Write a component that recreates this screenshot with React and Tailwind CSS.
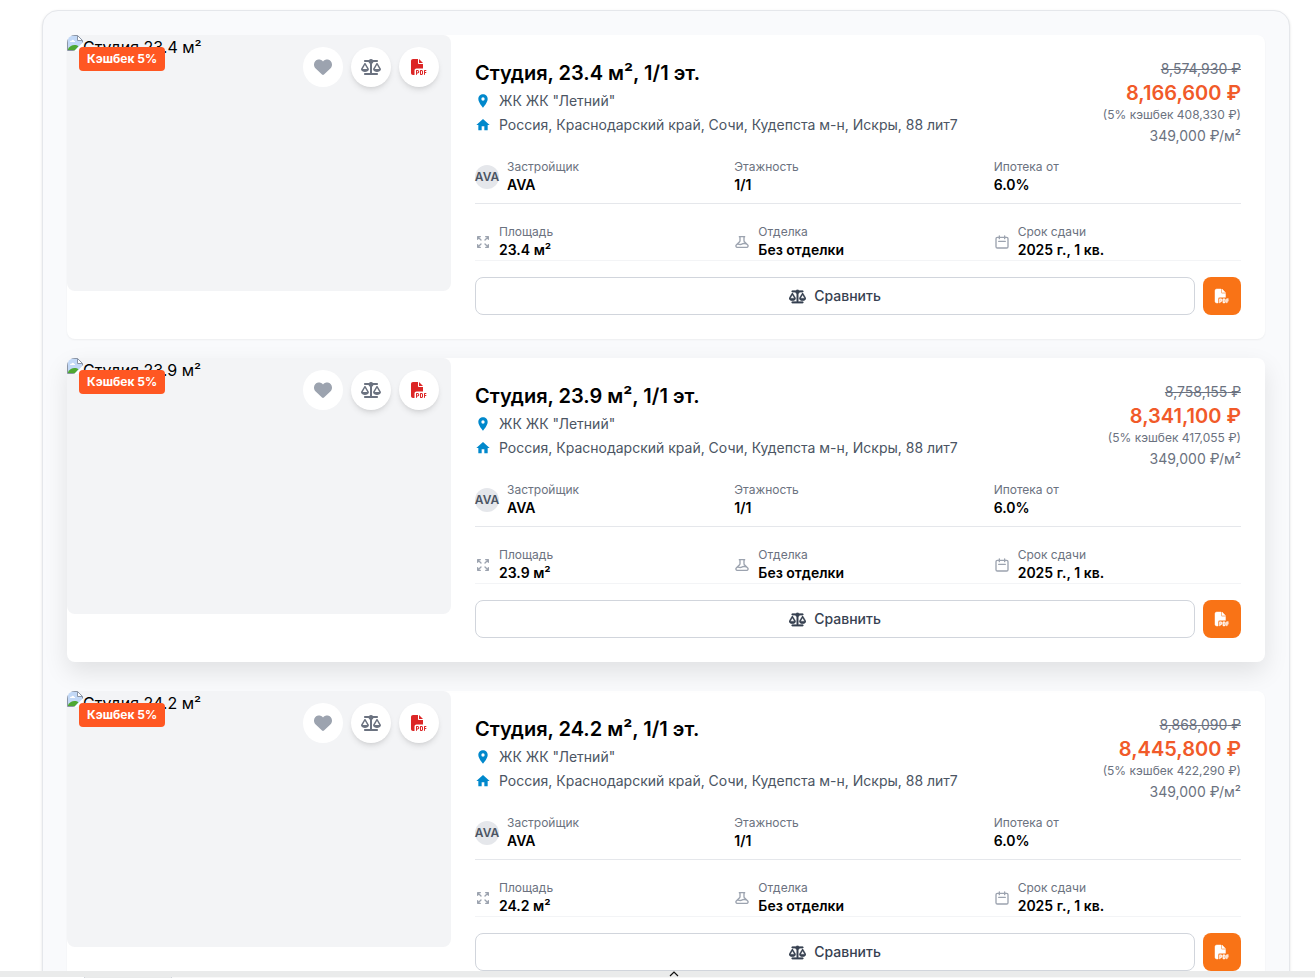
import { FaHeart, FaScaleBalanced, FaFilePdf } from "react-icons/fa6";
import { MdLocationOn, MdHome } from "react-icons/md";

const flats = [
  { area: "23.4", old: "8,574,930", price: "8,166,600", cashback: "408,330" },
  { area: "23.9", old: "8,758,155", price: "8,341,100", cashback: "417,055", raised: true },
  { area: "24.2", old: "8,868,090", price: "8,445,800", cashback: "422,290" },
];

const outlines = {
  expand:
    "M4 8V4m0 0h4M4 4l5 5m11-1V4m0 0h-4m4 0l-5 5M4 16v4m0 0h4m-4 0l5-5m11 5l-5-5m5 5v-4m0 4h-4",
  beaker:
    "M19.428 15.428a2 2 0 00-1.022-.547l-2.387-.477a6 6 0 00-3.86.517l-.318.158a6 6 0 01-3.86.517L6.05 15.21a2 2 0 00-1.806.547M8 4h8l-1 1v5.172a2 2 0 00.586 1.414l5 5c1.26 1.26.367 3.414-1.415 3.414H4.828c-1.782 0-2.674-2.154-1.414-3.414l5-5A2 2 0 009 10.172V5L8 4z",
  calendar:
    "M8 7V3m8 4V3m-9 8h10M5 21h14a2 2 0 002-2V7a2 2 0 00-2-2H5a2 2 0 00-2 2v12a2 2 0 002 2z",
};

function OutlineIcon({ name }) {
  return (
    <svg
      className="h-4 w-4 shrink-0 text-[#9ca3af]"
      viewBox="0 0 24 24"
      fill="none"
      stroke="currentColor"
      strokeWidth="2"
      strokeLinecap="round"
      strokeLinejoin="round"
      aria-hidden="true"
    >
      <path d={outlines[name]} />
    </svg>
  );
}

function MissingPicture() {
  return (
    <svg className="block h-4 w-4 shrink-0" viewBox="0 0 16 16" aria-hidden="true">
      <path d="M.5.5h10.500l4.500 4.500v3L8 15.500H.5z" fill="#c3d9f7" />
      <path d="M1 15.500v-1.500c1.500-2.500 4-4 6.500-4 1.500 0 3 .5 4 1.300L7.500 15.500z" fill="#4ea832" />
      <path d="M3 7c0-1 .8-1.500 1.500-1.300.5-1.200 2.300-1.200 2.600 0 1 0 1.200 1 .8 1.300z" fill="#fff" />
      <path d="M10.500.5v5h5z" fill="#fff" />
      <path d="M.5 15.500V.5h10l5 5v2M10.500.5v5h5M.5 15.500h6" fill="none" stroke="#8b95a5" />
      <path d="M16 7.500v3L10.500 16h-3z" fill="#fff" />
    </svg>
  );
}

function RoundButton({ label, className, children }) {
  return (
    <button
      type="button"
      aria-label={label}
      className={`flex h-10 w-10 items-center justify-center rounded-full bg-white ${className}`}
    >
      {children}
    </button>
  );
}

function Fact({ icon, label, value }) {
  return (
    <div className="flex items-center gap-2">
      {icon}
      <div>
        <p className="text-xs leading-4 text-[#6b7280]">{label}</p>
        <p className="text-sm leading-5 font-semibold">{value}</p>
      </div>
    </div>
  );
}

function FlatCard({ flat }) {
  return (
    <article
      className={`flex rounded-lg bg-white ${
        flat.raised ? "-translate-y-[5px] shadow-[0_10px_25px_rgba(0,0,0,0.1)]" : "shadow-[0_1px_2px_rgba(0,0,0,0.05)]"
      }`}
    >
      <div className="relative h-64 w-96 shrink-0 overflow-hidden rounded-lg bg-[#f3f4f6]">
        <div className="flex items-start">
          <MissingPicture />
          <span className="text-base">Студия {flat.area} м²</span>
        </div>
        <span className="absolute top-3 left-3 rounded bg-[#ff5722] px-2 py-1 text-xs font-bold text-white">
          Кэшбек 5%
        </span>
        <div className="absolute top-3 right-3 flex gap-2">
          <RoundButton label="В избранное" className="text-[#9ca3af]">
            <FaHeart size={18} />
          </RoundButton>
          <RoundButton label="Сравнить" className="text-[#6b7280] shadow-md">
            <FaScaleBalanced size={20} />
          </RoundButton>
          <RoundButton label="Скачать PDF" className="text-[#dc2626] shadow-md">
            <FaFilePdf size={16} />
          </RoundButton>
        </div>
      </div>

      <div className="min-w-0 flex-1 p-6">
        <div className="flex items-start justify-between">
          <div>
            <h2 className="text-xl leading-7 font-semibold">Студия, {flat.area} м², 1/1 эт.</h2>
            <p className="flex items-center gap-2 text-sm leading-7 text-[#4b5563]">
              <MdLocationOn size={16} className="text-[#0088cc]" />
              ЖК ЖК "Летний"
            </p>
            <p className="flex items-center gap-2 text-sm leading-5 text-[#4b5563]">
              <MdHome size={16} className="text-[#0088cc]" />
              Россия, Краснодарский край, Сочи, Кудепста м-н, Искры, 88 лит7
            </p>
          </div>
          <div className="text-right text-[#6b7280]">
            <p className="text-sm leading-5 line-through">{flat.old} ₽</p>
            <p className="text-xl leading-7 font-semibold text-[#f15a29]">{flat.price} ₽</p>
            <p className="text-xs leading-4">(5% кэшбек {flat.cashback} ₽)</p>
            <p className="text-sm leading-[26px]">349,000 ₽/м²</p>
          </div>
        </div>

        <div className="mt-[10px] grid grid-cols-3 gap-3 border-b border-gray-200 pb-2">
          <Fact
            icon={
              <span className="flex h-6 w-6 items-center justify-center rounded-full bg-[#e5e7eb] text-xs font-semibold text-[#4b5563]">
                AVA
              </span>
            }
            label="Застройщик"
            value="AVA"
          />
          <Fact label="Этажность" value="1/1" />
          <Fact label="Ипотека от" value="6.0%" />
        </div>

        <div className="mt-5 grid grid-cols-3 gap-3 border-b border-gray-100">
          <Fact icon={<OutlineIcon name="expand" />} label="Площадь" value={`${flat.area} м²`} />
          <Fact icon={<OutlineIcon name="beaker" />} label="Отделка" value="Без отделки" />
          <Fact icon={<OutlineIcon name="calendar" />} label="Срок сдачи" value="2025 г., 1 кв." />
        </div>

        <div className="mt-4 flex gap-2">
          <button
            type="button"
            className="flex flex-1 items-center justify-center gap-2 rounded-lg border border-gray-300 py-2 text-sm font-medium text-[#374151]"
          >
            <FaScaleBalanced size={17} strokeWidth={10} />
            Сравнить
          </button>
          <button
            type="button"
            aria-label="Скачать PDF"
            className="flex w-[38px] items-center justify-center rounded-lg bg-[#f97316] text-white"
          >
            <FaFilePdf size={14} strokeWidth={16} overflow="visible" />
          </button>
        </div>
      </div>
    </article>
  );
}

export default function App() {
  return (
    <div className="h-screen overflow-hidden bg-white font-[Inter,'Liberation_Sans',sans-serif] text-black">
      <div className="flex h-full flex-col">
        <main className="min-h-0 flex-1 overflow-hidden pt-[10px] pr-[25px] pl-[42px]">
          <section className="flex flex-col gap-6 rounded-2xl border border-gray-200 bg-[#f9fafc] p-6 shadow-sm">
            {flats.map((flat) => (
              <FlatCard key={flat.area} flat={flat} />
            ))}
          </section>
        </main>
        <footer className="shrink-0 bg-[#eaebeb]">
          <div className="flex h-[6px] pl-[669px]">
            <svg className="h-[6px] w-[10px]" viewBox="0 0 10 6" aria-hidden="true">
              <path d="M1 5l4-4 4 4" fill="none" stroke="#111" strokeWidth="1.200" />
            </svg>
          </div>
          <div className="flex h-px">
            <span className="w-[84px] bg-white" />
            <span className="w-[88px] border-x border-gray-300" />
            <span className="flex-1 bg-[#f7f7f7]" />
          </div>
        </footer>
      </div>
    </div>
  );
}
